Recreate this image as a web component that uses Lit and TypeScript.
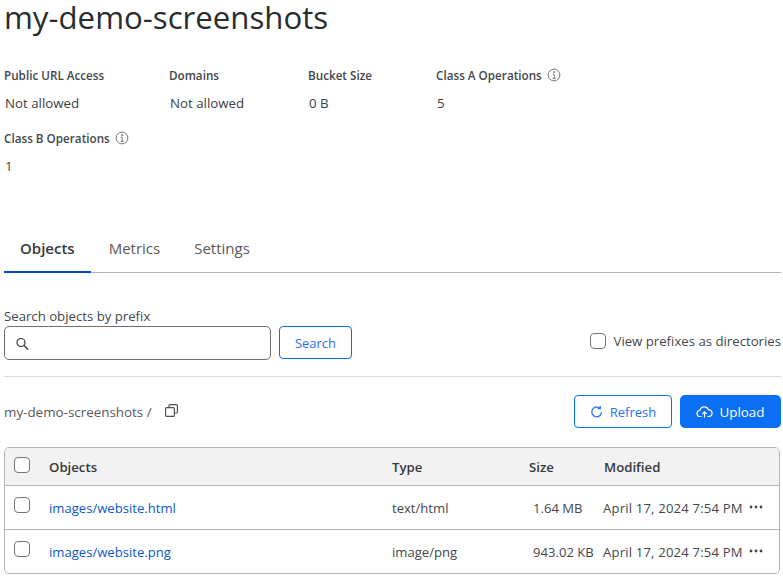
import { LitElement, html, css } from "lit";
import { customElement } from "lit/decorators.js";

const info = html`<svg class="info" viewBox="0 0 14 14" fill="none" stroke="#7a7a7a" stroke-width="1"><circle cx="7" cy="7" r="5.9"/><path d="M5.8 6.2H7.2V10.4M5.6 10.4H8.8M6.5 3.7h1.1v.9h-1.1z"/></svg>`;

const rows = [
  { name: "images/website.html", type: "text/html", size: "1.64 MB" },
  { name: "images/website.png", type: "image/png", size: "943.02 KB" },
];

@customElement("app-root")
export class AppRoot extends LitElement {
  static styles = css`
    :host { display: block; width: 781px; height: 576px; overflow: hidden; font-family: "Open Sans", "Noto Sans", sans-serif; color: #36393a; font-size: 13px; background: #fff; }
    .title { margin: 0 0 0 4px; height: 36px; line-height: 34px; font-size: 31.2px; font-weight: 400; color: #2a2d2e; white-space: nowrap; }
    .meta { display: flex; flex-wrap: wrap; margin-top: 25px; padding-left: 4px; width: 640px; }
    .m { height: 64px; box-sizing: border-box; }
    .m.a { width: 165px; } .m.b { width: 139px; } .m.c { width: 128px; } .m.d { width: 190px; } .m.e { width: 400px; margin-top: -1px; }
    .k { height: 28px; line-height: 28px; font-size: 11.7px; font-weight: 600; color: #44474a; display: flex; align-items: center; gap: 5px; white-space: nowrap; }
    .v { font-size: 13.3px; line-height: 28px; height: 28px; color: #3c4043; padding-left: 1px; }
    .info { width: 14px; height: 14px; }
    .tabs { display: flex; margin: 39px 0 0 4px; height: 46px; border-bottom: 1px solid #b4b4b4; box-sizing: border-box; }
    .tab { padding: 0 17px; box-sizing: border-box; font-size: 15px; line-height: 42px; color: #595959; white-space: nowrap; }
    .tab.on { padding: 0 16px; color: #36393a; font-weight: 600; border-bottom: 2px solid #0051c3; height: 46px; }
    .tab.on + .tab { margin-left: 1px; }
    .lab { margin: 33px 0 0 4px; height: 20px; line-height: 20px; font-size: 13.2px; color: #44474a; white-space: nowrap; }
    .searchrow { display: flex; align-items: flex-start; margin-left: 4px; gap: 8px; height: 50px; border-bottom: 1px solid #dcdcdc; }
    .input { width: 267px; height: 34px; box-sizing: border-box; border: 1px solid #6f6f6f; border-radius: 5px; display: flex; align-items: center; padding-left: 10px; }
    .btn { box-sizing: border-box; border-radius: 4px; font-size: 13px; display: inline-flex; align-items: center; justify-content: center; gap: 6px; }
    .outline { border: 1px solid #0a6ff2; color: #2672f5; background: #fff; }
    .sb { width: 73px; height: 33px; }
    .chk { width: 16px; height: 16px; box-sizing: border-box; border: 1px solid #757575; border-radius: 4px; background: #fff; flex: none; }
    .view { margin-left: auto; display: flex; align-items: center; gap: 8px; height: 30px; font-size: 13.2px; color: #44474a; white-space: nowrap; }
    .crumbrow { display: flex; align-items: center; margin: 18px 0 0 4px; height: 33px; }
    .crumb { font-size: 13.4px; color: #595959; white-space: nowrap; padding-top: 1px; }
    .copy { width: 15px; height: 15px; margin-left: 12px; margin-top: -2px; }
    .actions { margin-left: auto; display: flex; gap: 8px; }
    .rf { width: 98px; height: 33px; }
    .up { width: 101px; height: 33px; background: #0a6ff2; color: #fff; border: none; font-weight: 500; border-radius: 5px; font-size: 13.4px; }
    .table { margin: 19px 0 0 4px; width: 776px; height: 127px; box-sizing: border-box; border: 1px solid #b4b4b4; border-radius: 5px; overflow: hidden; }
    .tr { display: grid; grid-template-columns: 44px 343px 137px 74px 1fr 38px; height: 44px; align-items: center; border-bottom: 1px solid #b4b4b4; box-sizing: border-box; font-size: 13.1px; color: #44474a; white-space: nowrap; }
    .tr:last-child { border-bottom: none; height: 43px; }
    .tr.head { height: 38px; background: #f2f2f2; font-weight: 600; color: #36393a; font-size: 13.2px; }
    .tr .chk { margin: -6px 0 0 9px; }
    .tr.head .chk { margin-top: -4px; }
    .link { color: #0a57c9; }
    .sz { padding-left: 4px; }
    .date { letter-spacing: 0.18px; }
    .dots { width: 14px; height: 4px; margin: -2px 0 0 6px; }
    .head .sz { padding-left: 0; }
    .head .mod { padding-left: 1px; }
  `;

  render() {
    const dots = html`<svg class="dots" viewBox="0 0 14 4" fill="#444"><circle cx="2" cy="2" r="1.4"/><circle cx="7" cy="2" r="1.4"/><circle cx="12" cy="2" r="1.4"/></svg>`;
    return html`
      <div class="title">my-demo-screenshots</div>
      <div class="meta">
        <div class="m a"><div class="k">Public URL Access</div><div class="v">Not allowed</div></div>
        <div class="m b"><div class="k">Domains</div><div class="v">Not allowed</div></div>
        <div class="m c"><div class="k">Bucket Size</div><div class="v">0 B</div></div>
        <div class="m d"><div class="k">Class A Operations ${info}</div><div class="v">5</div></div>
        <div class="m e"><div class="k">Class B Operations ${info}</div><div class="v">1</div></div>
      </div>
      <div class="tabs">
        <div class="tab on">Objects</div>
        <div class="tab">Metrics</div>
        <div class="tab">Settings</div>
      </div>
      <div class="lab">Search objects by prefix</div>
      <div class="searchrow">
        <div class="input"><svg width="15" height="15" viewBox="0 0 15 15" fill="none" stroke="#333" stroke-width="1.2"><circle cx="6" cy="6.5" r="4"/><path d="M9 9.5l4 4"/></svg></div>
        <div class="btn outline sb">Search</div>
        <label class="view"><span class="chk"></span>View prefixes as directories</label>
      </div>
      <div class="crumbrow">
        <span class="crumb">my-demo-screenshots /</span>
        <svg class="copy" viewBox="0 0 15 15" fill="none" stroke="#555" stroke-width="1.2"><rect x="1.6" y="4.6" width="8.8" height="8.8" rx="1"/><path d="M5 4.5V2.6a1 1 0 0 1 1-1h6.4a1 1 0 0 1 1 1V9a1 1 0 0 1-1 1h-2"/></svg>
        <div class="actions">
          <div class="btn outline rf"><svg width="14" height="14" viewBox="0 0 14 14" fill="none" stroke="#2672f5" stroke-width="1.3"><path d="M11.6 7a4.9 4.9 0 1 1-1.8-3.8"/><path d="M10.2 1v2.6H7.6"/></svg>Refresh</div>
          <div class="btn up"><svg width="17" height="14" viewBox="0 0 17 14" fill="none" stroke="#fff" stroke-width="1.2"><path d="M5.5 11.5H4.2a3 3 0 0 1-.4-6 4.6 4.6 0 0 1 8.8-.6 3.3 3.3 0 0 1 .3 6.6h-1.4"/><path d="M8.5 12.6V7M6.4 9l2.1-2.1L10.6 9"/></svg>Upload</div>
        </div>
      </div>
      <div class="table">
        <div class="tr head"><span class="chk"></span><span>Objects</span><span>Type</span><span class="sz">Size</span><span class="mod">Modified</span><span></span></div>
        ${rows.map((r) => html`<div class="tr"><span class="chk"></span><span class="link">${r.name}</span><span>${r.type}</span><span class="sz">${r.size}</span><span class="date">April 17, 2024 7:54 PM</span>${dots}</div>`)}
      </div>
    `;
  }
}
